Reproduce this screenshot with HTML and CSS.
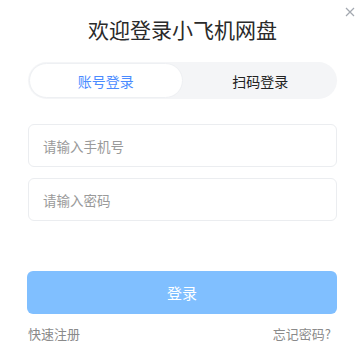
FILE: index.html
```html
<!DOCTYPE html>
<html lang="zh">
<head>
<meta charset="utf-8">
<link rel="stylesheet" href="styles.css">
</head>
<body>
<div class="dialog">
  <button class="close" aria-label="关闭">
    <svg width="10" height="10" viewBox="0 0 10 10"><path d="M1 1L9 9M9 1L1 9" stroke="#a3a8b0" stroke-width="1.2" fill="none"/></svg>
  </button>
  <h1 class="title">欢迎登录小飞机网盘</h1>
  <div class="tabs">
    <div class="tab active">账号登录</div>
    <div class="tab">扫码登录</div>
  </div>
  <div class="fields">
    <div class="field">请输入手机号</div>
    <div class="field">请输入密码</div>
  </div>
  <button class="submit">登录</button>
  <div class="links">
    <span>快速注册</span>
    <span>忘记密码?</span>
  </div>
</div>
</body>
</html>
```
FILE: styles.css
```css
html, body {
  margin: 0;
  padding: 0;
  background: #fff;
}
body {
  font-family: "Noto Sans CJK SC", "Noto Sans", sans-serif;
  width: 360px;
  height: 360px;
  overflow: hidden;
}
.dialog {
  position: relative;
  padding: 14px 23px 0 28px;
  display: flex;
  flex-direction: column;
}
.close {
  position: absolute;
  top: 7px;
  right: 5px;
  border: 0;
  background: none;
  padding: 0;
  width: 10px;
  height: 10px;
  display: flex;
}
.title {
  margin: 0;
  font-size: 21px;
  font-weight: 400;
  line-height: 30px;
  color: #2a2a2a;
  text-align: center;
}
.tabs {
  margin-top: 18px;
  height: 37px;
  box-sizing: border-box;
  background: #f4f5f7;
  border-radius: 19px;
  padding: 1px;
  display: flex;
}
.tab {
  flex: 1;
  display: flex;
  align-items: center;
  justify-content: center;
  font-size: 14px;
  color: #222;
  border-radius: 18px;
}
.tab.active {
  background: #fff;
  color: #4b8bff;
  border: 1px solid #eef0f3;
  margin-right: 2px;
}
.fields {
  margin-top: 25px;
  display: flex;
  flex-direction: column;
  gap: 11px;
  width: 309px;
}
.field {
  height: 43px;
  box-sizing: border-box;
  border: 1px solid #ebedf0;
  border-radius: 6px;
  padding-left: 14px;
  display: flex;
  align-items: center;
  font-size: 13.5px;
  color: #9a9a9a;
}
.submit {
  margin-top: 50px;
  height: 43px;
  border: 0;
  border-radius: 6px;
  background: #80bfff;
  color: #fff;
  font-family: inherit;
  font-size: 15px;
  width: 310px;
  margin-left: -1px;
}
.links {
  margin-top: 11px;
  display: flex;
  justify-content: space-between;
  font-size: 13px;
  line-height: 18px;
  color: #8a8a8a;
  padding-right: 6px;
}
```
